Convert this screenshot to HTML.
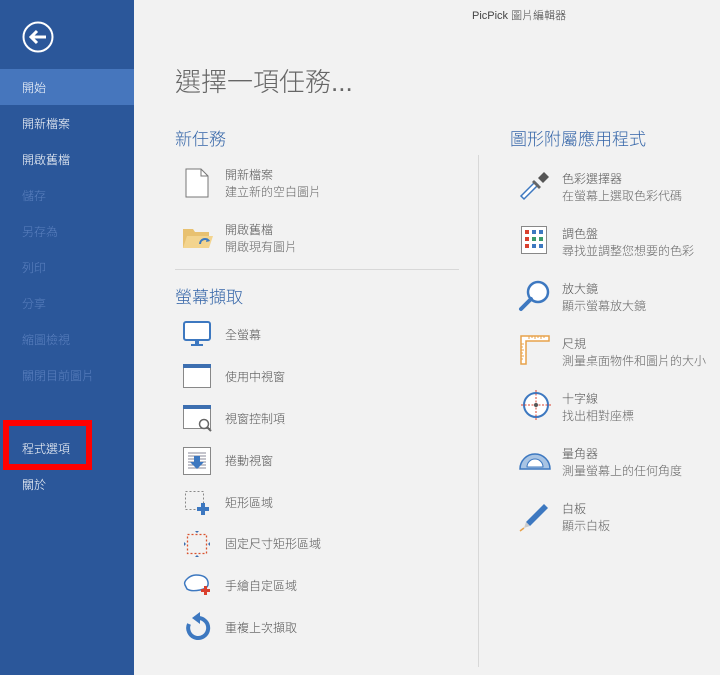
<!DOCTYPE html>
<html><head><meta charset="utf-8"><style>
*{margin:0;padding:0;box-sizing:border-box}
body{width:720px;height:675px;background:#f2f2f2;position:relative;overflow:hidden;font-family:"Liberation Sans","Noto Sans CJK TC",sans-serif;color:#555}
.sb{position:absolute;left:0;top:0;width:134px;height:675px;background:#2b579a}
.sel{position:absolute;left:0;top:69px;width:134px;height:36px;background:#4676bd}
.si{position:absolute;left:22px;font-size:12px;color:#fff;font-weight:300}
.dis{color:#5b80bf}
.red{position:absolute;left:3px;top:420px;width:89px;height:50px;border:6px solid #f00}
.t{position:absolute;font-size:12px;white-space:nowrap;color:#555;font-weight:300}
.s{color:#666}
.h{position:absolute;font-size:17px;color:#3465a8;font-weight:300}
svg{position:absolute}
</style></head><body>
<div class="sb"></div>
<div class="sel"></div>
<svg style="left:22px;top:21px" width="32" height="32" viewBox="0 0 32 32"><circle cx="16" cy="16" r="14.5" fill="none" stroke="#fff" stroke-width="2"/><path d="M24 16H9M15 10l-6 6 6 6" fill="none" stroke="#fff" stroke-width="3"/></svg>
<div class="si" style="top:79px">開始</div>
<div class="si" style="top:115px">開新檔案</div>
<div class="si" style="top:151px">開啟舊檔</div>
<div class="si dis" style="top:187px">儲存</div>
<div class="si dis" style="top:223px">另存為</div>
<div class="si dis" style="top:259px">列印</div>
<div class="si dis" style="top:295px">分享</div>
<div class="si dis" style="top:331px">縮圖檢視</div>
<div class="si dis" style="top:367px">關閉目前圖片</div>
<div class="si" style="top:440px">程式選項</div>
<div class="si" style="top:476px">關於</div>
<div class="red"></div>

<div class="t" style="left:472px;top:7px;font-size:11px;color:#444">PicPick 圖片編輯器</div>
<div style="position:absolute;left:175px;top:62px;font-size:26px;color:#666;font-weight:300">選擇一項任務...</div>
<div class="h" style="left:175px;top:125px">新任務</div>
<div class="h" style="left:510px;top:125px">圖形附屬應用程式</div>
<div class="h" style="left:175px;top:283px">螢幕擷取</div>
<div style="position:absolute;left:175px;top:269px;width:284px;height:1px;background:#d8d8d8"></div>
<div style="position:absolute;left:478px;top:155px;width:1px;height:512px;background:#d8d8d8"></div>

<svg style="left:185px;top:168px" width="24" height="30"><path d="M1 1H16L23 8V29H1Z" fill="#fff" stroke="#777"/><path d="M16 1V8H23" fill="none" stroke="#777"/></svg>
<div class="t" style="left:225px;top:166px">開新檔案</div><div class="t s" style="left:225px;top:183px">建立新的空白圖片</div>
<svg style="left:182px;top:226px" width="32" height="24"><path d="M1 3H11L13 6H27V22H1Z" fill="#e8c170"/><path d="M1 22L5 10H31L27 22Z" fill="#f3d48e"/><path d="M18 18a5 5 0 0 1 9-3" fill="none" stroke="#3d7ac0" stroke-width="2"/><path d="M25 12l3 3-4 1z" fill="#3d7ac0"/></svg>
<div class="t" style="left:225px;top:221px">開啟舊檔</div><div class="t s" style="left:225px;top:238px">開啟現有圖片</div>

<svg style="left:183px;top:321px" width="28" height="26"><rect x="1" y="1" width="26" height="18" rx="2" fill="#fff" stroke="#3d78c0" stroke-width="2"/><path d="M12 20h4v3h4v2H8v-2h4z" fill="#3d78c0"/></svg>
<div class="t" style="left:225px;top:326px">全螢幕</div>
<svg style="left:183px;top:364px" width="28" height="24"><rect x="0.5" y="0.5" width="27" height="23" fill="#fff" stroke="#888"/><rect x="0" y="0" width="28" height="4" fill="#3d6fb0"/></svg>
<div class="t" style="left:225px;top:368px">使用中視窗</div>
<svg style="left:183px;top:405px" width="30" height="28"><rect x="0.5" y="0.5" width="27" height="23" fill="#fff" stroke="#888"/><rect x="0" y="0" width="28" height="4" fill="#3d6fb0"/><circle cx="21" cy="19" r="4.5" fill="#fff" stroke="#666" stroke-width="1.5"/><path d="M24 22l4 4" stroke="#666" stroke-width="2"/></svg>
<div class="t" style="left:225px;top:410px">視窗控制項</div>
<svg style="left:183px;top:447px" width="28" height="28"><rect x="0.5" y="0.5" width="27" height="27" fill="#fff" stroke="#888"/><path d="M5 6h18M5 9h18M5 12h18M5 15h18M5 18h18M5 21h18" stroke="#889" stroke-width="1"/><path d="M11 9h6v6h4l-7 7-7-7h4z" fill="#3d78c0"/></svg>
<div class="t" style="left:225px;top:452px">捲動視窗</div>
<svg style="left:184px;top:490px" width="28" height="26"><rect x="1.5" y="1.5" width="18" height="18" fill="none" stroke="#888" stroke-dasharray="2 2"/><path d="M18 15h4v4h4v4h-4v4h-4v-4h-4v-4h4z" fill="#3d78c0" transform="translate(-1,-2)"/></svg>
<div class="t" style="left:225px;top:494px">矩形區域</div>
<svg style="left:183px;top:530px" width="28" height="28"><rect x="4.5" y="4.5" width="19" height="19" fill="none" stroke="#d9522e" stroke-width="1.3" stroke-dasharray="2 2"/><path d="M12 1h4l-2 2zM12 27h4l-2-2zM1 12v4l2-2zM27 12v4l-2-2z" fill="#3d6fb0"/></svg>
<div class="t" style="left:225px;top:535px">固定尺寸矩形區域</div>
<svg style="left:182px;top:572px" width="32" height="26"><path d="M3 13C1 9 8 3 14 3s11 2 12 7c1 5-3 7-8 8s-10 1-13-1z" fill="#fff" stroke="#3d78c0" stroke-width="1.5"/><path d="M22 14h3v3h3v3h-3v3h-3v-3h-3v-3h3z" fill="#d9402e"/></svg>
<div class="t" style="left:225px;top:577px">手繪自定區域</div>
<svg style="left:184px;top:612px" width="28" height="30"><path d="M14 6a10 10 0 1 1-9 6" fill="none" stroke="#3d78c0" stroke-width="4"/><path d="M16 0v12l-8-6z" fill="#3d78c0"/></svg>
<div class="t" style="left:225px;top:619px">重複上次擷取</div>

<svg style="left:518px;top:170px" width="32" height="32"><path d="M3 29L17 15l3 3L6 32z" fill="#fff" stroke="#3d78c0" stroke-width="1.5" transform="translate(0,-3)"/><path d="M20 8l6-6 5 5-6 6z" fill="#555"/><path d="M16 10l7 7-2 2-7-7z" fill="#666"/></svg>
<div class="t" style="left:562px;top:170px">色彩選擇器</div><div class="t s" style="left:562px;top:187px">在螢幕上選取色彩代碼</div>
<svg style="left:521px;top:226px" width="26" height="28"><rect x="0.5" y="0.5" width="25" height="27" fill="#fff" stroke="#888"/><g fill="#d9402e"><rect x="4" y="4" width="4" height="4"/><rect x="4" y="11" width="4" height="4"/><rect x="4" y="18" width="4" height="4"/></g><g fill="#3d78c0"><rect x="11" y="4" width="4" height="4"/><rect x="18" y="4" width="4" height="4"/><rect x="11" y="18" width="4" height="4"/><rect x="18" y="18" width="4" height="4"/></g><g fill="#3a9a6a"><rect x="11" y="11" width="4" height="4"/><rect x="18" y="11" width="4" height="4"/></g></svg>
<div class="t" style="left:562px;top:225px">調色盤</div><div class="t s" style="left:562px;top:242px">尋找並調整您想要的色彩</div>
<svg style="left:518px;top:279px" width="32" height="34"><circle cx="20" cy="13" r="10" fill="#fff" stroke="#3d78c0" stroke-width="2.5"/><path d="M13 20L3 30" stroke="#3d78c0" stroke-width="4" stroke-linecap="round"/></svg>
<div class="t" style="left:562px;top:280px">放大鏡</div><div class="t s" style="left:562px;top:297px">顯示螢幕放大鏡</div>
<svg style="left:520px;top:335px" width="30" height="30"><path d="M1 1H29V6H6V29H1Z" fill="#fff" stroke="#e8a24a" stroke-width="1.5"/><path d="M9 1v3M12 1v2M15 1v3M18 1v2M21 1v3M24 1v2M1 9h3M1 12h2M1 15h3M1 18h2M1 21h3M1 24h2" stroke="#e8a24a"/></svg>
<div class="t" style="left:562px;top:335px">尺規</div><div class="t s" style="left:562px;top:352px">測量桌面物件和圖片的大小</div>
<svg style="left:520px;top:389px" width="32" height="32"><circle cx="16" cy="16" r="12" fill="#fff" stroke="#3d78c0" stroke-width="2"/><path d="M16 1v30M1 16h30" stroke="#d9402e" stroke-dasharray="2 1.5"/><circle cx="16" cy="16" r="2" fill="#555"/></svg>
<div class="t" style="left:562px;top:390px">十字線</div><div class="t s" style="left:562px;top:407px">找出相對座標</div>
<svg style="left:519px;top:452px" width="32" height="20"><path d="M1 17A15 15 0 0 1 31 17Z" fill="#a8c4e4" stroke="#3d78c0" stroke-width="1.5"/><path d="M8 15A8 8 0 0 1 24 15Z" fill="#fff" stroke="#3d78c0"/></svg>
<div class="t" style="left:562px;top:445px">量角器</div><div class="t s" style="left:562px;top:462px">測量螢幕上的任何角度</div>
<svg style="left:518px;top:500px" width="32" height="32"><path d="M8 22L26 4l4 4-18 18z" fill="#3d78c0"/><path d="M8 22l4 4-6 2z" fill="#ccc"/><path d="M6 28L2 31" stroke="#e8a24a" stroke-width="1.5"/></svg>
<div class="t" style="left:562px;top:500px">白板</div><div class="t s" style="left:562px;top:517px">顯示白板</div>
</body></html>
